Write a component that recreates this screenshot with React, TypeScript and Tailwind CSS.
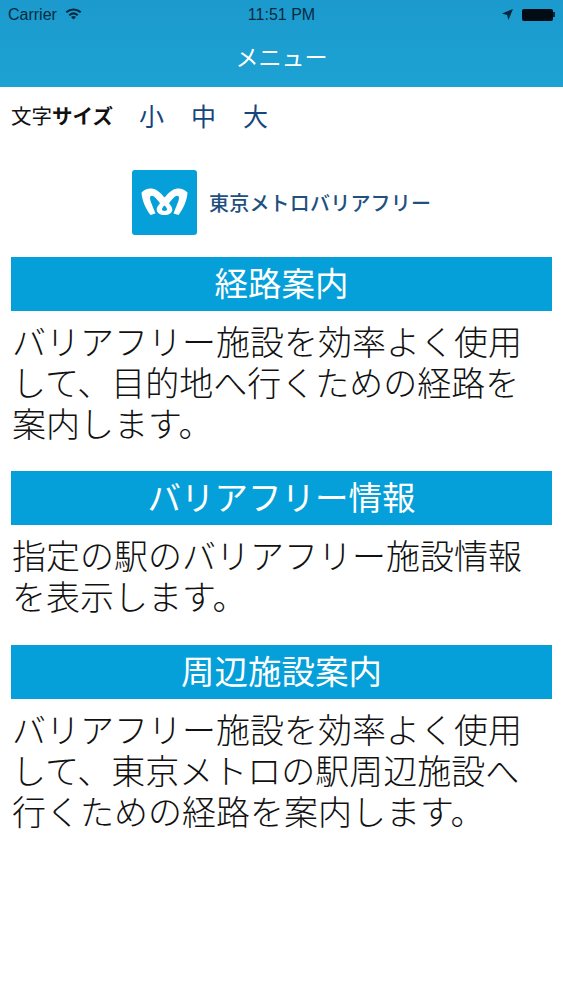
import React from "react";

const jp = "font-['Noto_Sans_CJK_JP','Noto_Sans_CJK_SC',sans-serif]";

const sections = [
  {
    title: "経路案内",
    lines: ["バリアフリー施設を効率よく使用", "して、目的地へ行くための経路を", "案内します。"],
  },
  {
    title: "バリアフリー情報",
    lines: ["指定の駅のバリアフリー施設情報", "を表示します。"],
  },
  {
    title: "周辺施設案内",
    lines: ["バリアフリー施設を効率よく使用", "して、東京メトロの駅周辺施設へ", "行くための経路を案内します。"],
  },
];

const MetroMark = () => (
  <svg viewBox="0 0 65 65" className="w-[65px] h-[65px] rounded-[3px] bg-[#05a0d9]">
    <path
      fill="#fff"
      fillRule="evenodd"
      d="M9.500 22.500C14 18 20 17.500 25 20.500C28 22.500 30.500 25 32.500 27.500C34.500 25 37 22.500 40 20.500C45 17.500 51 18 55.500 22.500C55 31 51 39 46.500 45L41.500 43.500C43.500 38 47 31 47 28C47 25.500 45 25 43 26.500C41 28 38.500 31 37 33.500C39 35.500 40.300 37.500 40.300 39.500C40.300 43 37 45 32.500 45C28 45 24.700 43 24.700 39.500C24.700 37.500 26 35.500 28 33.500C26.500 31 24 28 22 26.500C20 25 18 25.500 18 28C18 31 21.500 38 23.500 43.500L18.500 45C14 39 10 31 9.500 22.500ZM32.500 35.500C30.800 37 29.800 38.500 30 39.800C30.300 41.300 34.700 41.300 35 39.800C35.200 38.500 34.200 37 32.500 35.500Z"
    />
  </svg>
);

export default function App() {
  return (
    <div className={`w-[563px] h-[1000px] bg-white overflow-hidden ${jp}`}>
      <header className="h-[87px] bg-gradient-to-b from-[#1c9acd] to-[#1ca2d3]">
        <div className="relative flex items-center h-[29px] pl-[8px] pr-[8px] text-[16px] text-[#062a3f] font-['Liberation_Sans',sans-serif]">
          <span>Carrier</span>
          <svg viewBox="0 0 20 14" className="ml-[8px] mb-[1px] w-[17px] h-[12px]" fill="none" stroke="#062a3f" strokeWidth="2.400">
            <path d="M1.500 5C6.500 0.500 13.500 0.500 18.500 5" />
            <path d="M5 8.500C8 5.800 12 5.800 15 8.500" />
            <path d="M10 13.500L7 10.500C9 9 11 9 13 10.500Z" fill="#062a3f" stroke="none" />
          </svg>
          <span className="absolute left-0 right-0 text-center font-medium">11:51 PM</span>
          <svg viewBox="0 0 12 12" className="ml-auto w-[11px] h-[11px] mr-[9px]" fill="#062a3f">
            <path d="M12 0L7 12L5.500 6.500L0 5Z" />
          </svg>
          <div className="w-[31px] h-[12px] rounded-[2px] bg-[#020c14]" />
          <div className="w-[2px] h-[5px] bg-[#062a3f]" />
        </div>
        <h1 className="text-center text-white text-[23px] leading-[54px] h-[58px]">メニュー</h1>
      </header>

      <div className="flex items-center h-[57px] pl-[11px]">
        <span className="text-[20.500px] text-[#111] w-[128px]">
          文字<span className="font-bold">サイズ</span>
        </span>
        <div className="flex gap-[27px] text-[25px] text-[#14457c]">
          <span>小</span>
          <span>中</span>
          <span>大</span>
        </div>
      </div>

      <div className="flex items-center pl-[132px] mt-[26px] gap-[12px]">
        <MetroMark />
        <span className="text-[20px] text-[#21507f] tracking-[0.2px] font-medium">東京メトロバリアフリー</span>
      </div>

      <main className="px-[11px] mt-[22px]">
        {sections.map((s) => (
          <section key={s.title} className="mb-[28.250px]">
            <h2 className="h-[54px] bg-[#05a0d9] text-white text-center text-[33.500px] leading-[50px]">
              {s.title}
            </h2>
            <p className="mt-[9px] pl-[1px] text-[34px] leading-[41px] text-[#111] font-light whitespace-nowrap">
              {s.lines.map((l) => (
                <span key={l} className="block">
                  {l}
                </span>
              ))}
            </p>
          </section>
        ))}
      </main>
    </div>
  );
}
